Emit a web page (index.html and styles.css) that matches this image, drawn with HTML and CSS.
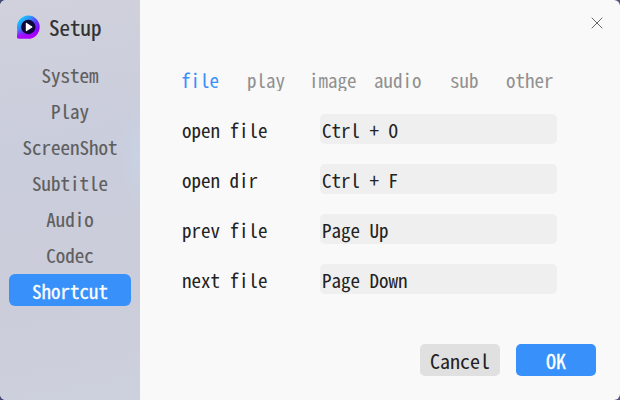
FILE: index.html
```
<!DOCTYPE html>
<html lang="en">
<head>
<meta charset="utf-8">
<title>Setup</title>
<link rel="stylesheet" href="styles.css">
</head>
<body>
<div class="window">
  <aside class="sidebar">
    <header class="brand">
      <svg class="logo" width="24" height="24" viewBox="0 0 24 24">
        <defs>
          <linearGradient id="ring" x1="0.1" y1="0.1" x2="0.75" y2="0.8">
            <stop offset="0" stop-color="#19d0ff"/>
            <stop offset="0.3" stop-color="#2a9afa"/>
            <stop offset="0.65" stop-color="#6038ff"/>
            <stop offset="1" stop-color="#9000ff"/>
          </linearGradient>
          <linearGradient id="tail" x1="0" y1="0" x2="0" y2="1">
            <stop offset="0.6" stop-color="#b800ff" stop-opacity="0"/>
            <stop offset="1" stop-color="#b800ff"/>
          </linearGradient>
        </defs>
        <path d="M12.3-.4A11.4 11.5 0 0 1 12.3 22.6H3Q.5 22.6 1 20.1Q1.6 17.6 1 11.4A11.4 11.5 0 0 1 12.3-.4Z" fill="url(#ring)"/>
        <path d="M12.3-.4A11.4 11.5 0 0 1 12.3 22.6H3Q.5 22.6 1 20.1Q1.6 17.6 1 11.4A11.4 11.5 0 0 1 12.3-.4Z" fill="url(#tail)"/>
        <circle cx="12.3" cy="11" r="7.2" fill="#0c0938"/>
        <path d="M10.4 7.4V14.6L15.8 11Z" fill="#fff" stroke="#fff" stroke-width="1.2" stroke-linejoin="round"/>
      </svg>
      <h1 class="title">Setup</h1>
    </header>
    <nav class="menu">
      <a class="menu-item">System</a>
      <a class="menu-item">Play</a>
      <a class="menu-item">ScreenShot</a>
      <a class="menu-item">Subtitle</a>
      <a class="menu-item">Audio</a>
      <a class="menu-item">Codec</a>
      <a class="menu-item active">Shortcut</a>
    </nav>
  </aside>
  <main class="content">
    <div class="topbar">
      <svg class="close" width="12" height="12" viewBox="0 0 12 12"><path d="M.7.7 11.3 11.3M11.3.7.7 11.3" stroke="#686868" stroke-width="1" fill="none"/></svg>
    </div>
    <div class="tabs">
      <span class="tab active">file</span>
      <span class="tab">play</span>
      <span class="tab">image</span>
      <span class="tab">audio</span>
      <span class="tab">sub</span>
      <span class="tab">other</span>
    </div>
    <div class="rows">
      <span class="label">open file</span><div class="field">Ctrl + O</div>
      <span class="label">open dir</span><div class="field">Ctrl + F</div>
      <span class="label">prev file</span><div class="field">Page Up</div>
      <span class="label">next file</span><div class="field">Page Down</div>
    </div>
    <footer class="actions">
      <div class="button">Cancel</div>
      <div class="button primary">OK</div>
    </footer>
  </main>
</div>
</body>
</html>
```
FILE: styles.css
```
* { box-sizing: border-box; }
body {
  margin: 0;
  background: linear-gradient(90deg, #454a75, #5d4c7c);
  font-family: "Noto Sans Mono CJK SC", "Noto Sans Mono CJK JP", "Noto Sans CJK SC", monospace;
  font-size: 19px;
  color: #222;
}
.window {
  display: flex;
  width: 620px;
  height: 400px;
  border-radius: 6px;
  overflow: hidden;
  background: #f9f9f9;
}
.sidebar {
  width: 140px;
  background:
    radial-gradient(ellipse 22px 55px at 142px 155px, #c8d3e5, transparent),
    linear-gradient(170deg, #d0d1dc, #cacddc 38%, #cccdda 75%, #cdd1dd);
}
.brand {
  display: flex;
  align-items: center;
  height: 58px;
  padding: 0 0 2px 16px;
}
.logo { overflow: visible; }
.title {
  margin: 0 0 2px 9px;
  font-size: 21px;
  font-weight: 400;
  line-height: 30px;
  color: #303030;
  -webkit-text-stroke: 0.2px;
}
.menu {
  display: flex;
  flex-direction: column;
  gap: 4px;
  padding: 0 9px;
}
.menu-item {
  height: 32px;
  border-radius: 6px;
  line-height: 34px;
  text-align: center;
  color: #5e5e5e;
  -webkit-text-stroke: 0.15px;
}
.menu-item.active {
  background: #3890fa;
  color: #fff;
  -webkit-text-stroke: 0.3px;
}
.content { flex: 1; }
.topbar {
  display: flex;
  justify-content: flex-end;
  height: 64px;
  padding: 17px 17px 0 0;
}
.tabs {
  display: grid;
  grid-template-columns: 66px 62px 65px 76px 56px 60px;
  height: 27px;
  margin-bottom: 23px;
  padding-left: 41px;
  line-height: 31px;
  overflow: hidden;
}
.tab { color: #909090; }
.tab.active { color: #3890fa; }
.rows {
  display: grid;
  grid-template-columns: 138px 237px;
  row-gap: 20px;
  padding-left: 42px;
  line-height: 32px;
}
.label, .field { height: 30px; }
.field {
  padding-left: 2px;
  border-radius: 5px;
  background: #efefef;
}
.actions {
  display: flex;
  justify-content: flex-end;
  gap: 16px;
  padding: 50px 24px 0 0;
}
.button {
  width: 80px;
  height: 32px;
  border-radius: 5px;
  background: #e0e0e0;
  font-size: 20px;
  line-height: 33px;
  text-align: center;
}
.button.primary {
  background: #3890fa;
  color: #fff;
  -webkit-text-stroke: 0.3px;
}
```
